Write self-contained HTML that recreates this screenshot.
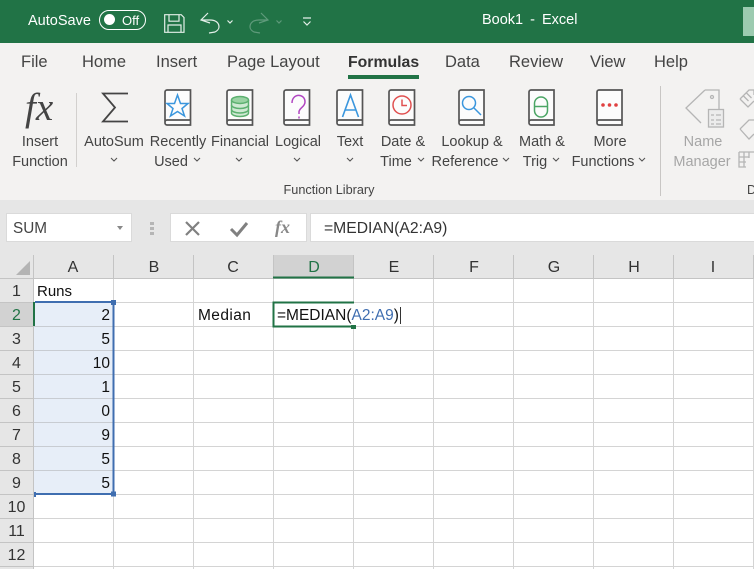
<!DOCTYPE html>
<html><head><meta charset="utf-8">
<style>
html,body{margin:0;padding:0}
body{width:754px;height:569px;overflow:hidden;position:relative;background:#fff;font-family:"Liberation Sans",sans-serif;color:#222}
.a{position:absolute;white-space:nowrap}
.tab{position:absolute;top:53px;font-size:16.5px;color:#444;white-space:nowrap}
.rb{position:absolute;font-size:14.5px;color:#444;white-space:nowrap;transform:translateX(-50%)}
.gr{color:#a6a6a6}
.ch{position:absolute;top:259px;font-size:16px;color:#333;transform:translateX(-50%)}
.rh{position:absolute;left:0;width:33px;text-align:center;font-size:16px;color:#333}
.v{position:absolute;left:34px;width:76px;text-align:right;font-size:15.5px;color:#111}
svg{position:absolute;overflow:visible}
</style></head><body>
<div class="a" style="left:0;top:0;width:754px;height:43px;background:#217346"></div>
<div class="a" style="left:28px;top:13px;font-size:14.5px;color:#fff">AutoSave</div>
<div class="a" style="left:99px;top:10px;width:45px;height:18px;border:1px solid #fff;border-radius:10px"></div>
<div class="a" style="left:104px;top:14px;width:11px;height:11px;background:#fff;border-radius:50%"></div>
<div class="a" style="left:122px;top:13px;font-size:13px;color:#fff">Off</div>
<svg style="left:0;top:0" width="340" height="43" fill="none" stroke="#e4efe9" stroke-width="1.2">
<path d="M164.700 14.700h16.500l2.800 2.800v14.800h-19.300zM169 14.700v6.500h10v-6.500M168 32.300v-7.300h13v7.300"/>
<path d="M208 13l-7 7 9 3M201 20h9c6 0 9 3 9 7 0 2-2 4-4 5l-6 1"/>
<path d="M227.500 20.500l2.500 2.500 2.500-2.500" stroke-width="1.2"/>
<g stroke="#5f9a7b"><path d="M261 13l7 7-9 3M268 20h-9c-6 0-9 3-9 7 0 2 2 4 4 5l6 1"/><path d="M276.500 20.500l2.500 2.500 2.500-2.500" stroke-width="1.2"/></g>
<path d="M303 18h8M303.500 21.500l3.500 3.500 3.500-3.500" stroke-width="1.200"/>
</svg>
<div class="a" style="left:482px;top:12px;font-size:14.500px;color:#fff;word-spacing:3px">Book1 - Excel</div>
<div class="a" style="left:743px;top:7px;width:11px;height:29px;background:#9ccbb0"></div>

<div class="a" style="left:0;top:43px;width:754px;height:157px;background:#f3f2f1"></div>
<div class="a" style="left:0;top:200px;width:754px;height:55px;background:#e6e6e6"></div>
<div class="tab" style="left:21px">File</div>
<div class="tab" style="left:82px">Home</div>
<div class="tab" style="left:156px">Insert</div>
<div class="tab" style="left:227px">Page Layout</div>
<div class="tab" style="left:348px;font-weight:bold;color:#333;font-size:15.800px;top:54px">Formulas</div>
<div class="a" style="left:348px;top:75px;width:71px;height:4px;background:#217346"></div>
<div class="tab" style="left:445px">Data</div>
<div class="tab" style="left:509px">Review</div>
<div class="tab" style="left:590px">View</div>
<div class="tab" style="left:654px">Help</div>

<div class="a" style="left:76px;top:93px;width:1px;height:74px;background:#d2d0ce"></div>
<div class="a" style="left:660px;top:86px;width:1px;height:110px;background:#c8c6c4"></div>
<div class="a" style="left:25px;top:85px;font-family:'Liberation Serif',serif;font-style:italic;font-size:39px;color:#444">fx</div>

<svg style="left:0;top:85px" width="754" height="60" fill="none" stroke="#555" stroke-width="1.700">
<path d="M128 8.500h-25l12 14-12 14h25" stroke-width="1.800" stroke="#444"/>
<g fill="#fcfcfc">
<path d="M167 5h23.500v35h-23.500a2 2 0 0 1-2-2v-31a2 2 0 0 1 2-2zM165 37a2 2 0 0 1 2-2h23.500"/>
<path d="M229 5h23.500v35h-23.500a2 2 0 0 1-2-2v-31a2 2 0 0 1 2-2zM227 37a2 2 0 0 1 2-2h23.500"/>
<path d="M286 5h23.500v35h-23.500a2 2 0 0 1-2-2v-31a2 2 0 0 1 2-2zM284 37a2 2 0 0 1 2-2h23.500"/>
<path d="M339 5h23.500v35h-23.500a2 2 0 0 1-2-2v-31a2 2 0 0 1 2-2zM337 37a2 2 0 0 1 2-2h23.500"/>
<path d="M391 5h23.500v35h-23.500a2 2 0 0 1-2-2v-31a2 2 0 0 1 2-2zM389 37a2 2 0 0 1 2-2h23.500"/>
<path d="M461 5h23v35h-23a2 2 0 0 1-2-2v-31a2 2 0 0 1 2-2zM459 37a2 2 0 0 1 2-2h23"/>
<path d="M531 5h23v35h-23a2 2 0 0 1-2-2v-31a2 2 0 0 1 2-2zM529 37a2 2 0 0 1 2-2h23"/>
<path d="M599 5h23v35h-23a2 2 0 0 1-2-2v-31a2 2 0 0 1 2-2zM597 37a2 2 0 0 1 2-2h23"/>
</g>
<g stroke-width="1.500">
<path d="M177.500 10l3 8.500h7.500l-6 5 2.500 7.500-7-4.500-7 4.500 2.500-7.500-6-5h7.500z" stroke="#3a96dd"/>
<g stroke="#5cb070"><path d="M231.500 15v13c0 2 4 3.500 8.500 3.500s8.500-1.500 8.500-3.500v-13" fill="#cfe9d4"/><ellipse cx="240" cy="15" rx="8.500" ry="3.500" fill="#9ad3a4"/><path d="M231.500 20c0 2 4 3.500 8.500 3.500s8.500-1.500 8.500-3.500M231.500 24.500c0 2 4 3.500 8.500 3.500s8.500-1.500 8.500-3.500"/></g>
<path d="M292 18c0-10 13-10 13-1 0 5-6 6-6 10v2M299 31.500v2" stroke="#b146c2"/>
<path d="M342.500 32l8-22 8 22M345.500 25h10" stroke="#3a96dd" stroke-width="1.600"/>
<g stroke="#e05050"><circle cx="402" cy="20" r="9"/><path d="M402 14.500v6h5"/></g>
<g stroke="#3a96dd"><circle cx="469" cy="18" r="6.500"/><path d="M474 23l7 7"/></g>
<g stroke="#4aa564"><rect x="534.500" y="12" width="13" height="20" rx="6.500"/><path d="M534.500 21.500h13"/></g>
</g>
<g fill="#e04040" stroke="none"><circle cx="603" cy="20" r="1.800"/><circle cx="609.500" cy="20" r="1.800"/><circle cx="616" cy="20" r="1.800"/></g>
<g stroke="#b5b5b5" stroke-width="1.300">
<path d="M705 5h14v19M705 5l-19 18 15 15"/>
<rect x="708.500" y="24.500" width="15" height="17.500" fill="#ececec"/>
<path d="M711 30h3M716 30h5M711 35h3M716 35h5M711 39h3M716 39h5"/>
<circle cx="712" cy="12" r="1.500"/>
<path d="M740 14l9-9h5v5M740 14l8 8 6-6M743.500 11l5 5M746.500 8l5 5"/>
<path d="M740 44l9-9h5M740 44l9 10 5-5"/>
<path d="M739 67h15M739 67v15h7M739 72h10M739 77h7M744 67v15M749 67v6"/>
</g>
</svg>

<div class="rb" style="left:40px;top:134px">Insert</div>
<div class="rb" style="left:40px;top:154px">Function</div>
<div class="rb" style="left:114px;top:134px">AutoSum</div>
<div class="rb" style="left:178px;top:134px">Recently</div>
<div class="rb" style="left:171px;top:154px">Used</div>
<div class="rb" style="left:240px;top:134px">Financial</div>
<div class="rb" style="left:298px;top:134px">Logical</div>
<div class="rb" style="left:350px;top:134px">Text</div>
<div class="rb" style="left:403px;top:134px">Date &amp;</div>
<div class="rb" style="left:396px;top:154px">Time</div>
<div class="rb" style="left:472px;top:134px">Lookup &amp;</div>
<div class="rb" style="left:465px;top:154px">Reference</div>
<div class="rb" style="left:542px;top:134px">Math &amp;</div>
<div class="rb" style="left:535px;top:154px">Trig</div>
<div class="rb" style="left:610px;top:134px">More</div>
<div class="rb" style="left:603px;top:154px">Functions</div>
<div class="rb gr" style="left:703px;top:134px">Name</div>
<div class="rb gr" style="left:702px;top:154px">Manager</div>
<div class="rb" style="left:329px;top:183px;font-size:12.700px">Function Library</div>
<div class="a" style="left:747px;top:183px;font-size:12.700px;color:#444">D</div>
<svg style="left:0;top:150px" width="754" height="20" fill="none" stroke="#555" stroke-width="1.100">
<path d="M111 8l3 3 3-3M194 8l3 3 3-3M236 8l3 3 3-3M294 8l3 3 3-3M347 8l3 3 3-3M418 8l3 3 3-3M503 8l3 3 3-3M553 8l3 3 3-3M639 8l3 3 3-3"/>
</svg>

<div class="a" style="left:6px;top:213px;width:126px;height:29px;background:#fff;border:1px solid #dadada;box-sizing:border-box"></div>
<div class="a" style="left:13px;top:220px;font-size:15.300px;color:#444">SUM</div>
<div class="a" style="left:117px;top:226px;width:0;height:0;border-left:3.500px solid transparent;border-right:3.500px solid transparent;border-top:4px solid #888"></div>
<div class="a" style="left:150px;top:222px;width:4px;height:3px;background:#b5b5b5;box-shadow:0 5px 0 #b5b5b5,0 10px 0 #b5b5b5"></div>
<div class="a" style="left:170px;top:213px;width:137px;height:29px;background:#fff;border:1px solid #dadada;box-sizing:border-box"></div>
<div class="a" style="left:310px;top:213px;width:444px;height:29px;background:#fff;border:1px solid #dadada;border-right:none;box-sizing:border-box"></div>
<svg style="left:0;top:205px" width="300" height="40" fill="none" stroke="#808080" stroke-width="2.200">
<path d="M186 17l13 13M199 17l-13 13"/>
<path d="M231 24l6 6 10-12" stroke-width="3"/>
</svg>
<div class="a" style="left:275px;top:217px;font-family:'Liberation Serif',serif;font-style:italic;font-weight:bold;font-size:18px;color:#888">fx</div>
<div class="a" style="left:324px;top:220px;font-size:15.700px;color:#333">=MEDIAN(A2:A9)</div>

<div class="a" style="left:0;top:255px;width:754px;height:23px;background:#e6e6e6"></div>
<div class="a" style="left:0;top:278px;width:33px;height:291px;background:#e6e6e6"></div>
<div class="a" style="left:273px;top:255px;width:81px;height:23px;background:#d2d2d2"></div>
<div class="a" style="left:0;top:302px;width:33px;height:24px;background:#d2d2d2"></div>
<svg style="left:0;top:0" width="754" height="569">
<path d="M30 261v14h-14z" fill="#b4b4b4"/>
<g stroke="#d4d4d4" stroke-width="1">
<path d="M113.500 278v291M193.500 278v291M273.500 278v291M353.500 278v291M433.500 278v291M513.500 278v291M593.500 278v291M673.500 278v291M753.500 278v291"/>
<path d="M33 302.500h721M33 326.500h721M33 350.500h721M33 374.500h721M33 398.500h721M33 422.500h721M33 446.500h721M33 470.500h721M33 494.500h721M33 518.500h721M33 542.500h721M33 566.500h721"/>
</g>
<g stroke="#c4c4c4" stroke-width="1">
<path d="M33.500 255v314M113.500 255v23M193.500 255v23M273.500 255v23M353.500 255v23M433.500 255v23M513.500 255v23M593.500 255v23M673.500 255v23M753.500 255v23"/>
<path d="M0 278.500h754M0 302.500h33M0 326.500h33M0 350.500h33M0 374.500h33M0 398.500h33M0 422.500h33M0 446.500h33M0 470.500h33M0 494.500h33M0 518.500h33M0 542.500h33M0 566.500h33"/>
</g>
<rect x="34" y="302" width="80" height="192" fill="#e7eef8"/>
<path d="M34 326.500h80M34 350.500h80M34 374.500h80M34 398.500h80M34 422.500h80M34 446.500h80M34 470.500h80" stroke="#c8ccd2"/>
<path d="M35 302h78.500v192h-78.500" fill="none" stroke="#3f6eb0" stroke-width="2"/>
<rect x="111" y="300" width="5" height="5" fill="#3f6eb0"/>
<rect x="34" y="492" width="2" height="5" fill="#3f6eb0"/>
<rect x="111" y="491.500" width="5" height="5" fill="#3f6eb0"/>
<path d="M273 277.500h81" stroke="#217346" stroke-width="2"/>
<path d="M34 302v24" stroke="#217346" stroke-width="2"/>
<path d="M354 302.500h-80.500v24h80.500" fill="#fff" stroke="#217346" stroke-width="2"/>
<rect x="351" y="325" width="5" height="4" fill="#217346"/>
</svg>
<div class="ch" style="left:73px">A</div><div class="ch" style="left:154px">B</div><div class="ch" style="left:233px">C</div>
<div class="ch" style="left:314px;color:#217346">D</div><div class="ch" style="left:394px">E</div><div class="ch" style="left:474px">F</div>
<div class="ch" style="left:554px">G</div><div class="ch" style="left:634px">H</div><div class="ch" style="left:713px">I</div>
<div class="rh" style="top:283px">1</div><div class="rh" style="top:307px;color:#217346">2</div><div class="rh" style="top:331px">3</div>
<div class="rh" style="top:355px">4</div><div class="rh" style="top:379px">5</div><div class="rh" style="top:403px">6</div>
<div class="rh" style="top:427px">7</div><div class="rh" style="top:451px">8</div><div class="rh" style="top:475px">9</div>
<div class="rh" style="top:499px">10</div><div class="rh" style="top:523px">11</div><div class="rh" style="top:547px">12</div>
<div class="a" style="left:37px;top:283px;font-size:15px;color:#111">Runs</div>
<div class="v" style="top:307px">2</div><div class="v" style="top:331px">5</div><div class="v" style="top:355px">10</div>
<div class="v" style="top:379px">1</div><div class="v" style="top:403px">0</div><div class="v" style="top:427px">9</div>
<div class="v" style="top:451px">5</div><div class="v" style="top:475px">5</div>
<div class="a" style="left:198px;top:307px;font-size:15.500px;letter-spacing:.4px;color:#111">Median</div>
<div class="a" style="left:277px;top:307px;font-size:15.500px;color:#111;background:#fff;padding-right:1px;border-right:1px solid #333;line-height:17px">=MEDIAN(<span style="color:#3f6eb0">A2:A9</span>)</div>
</body></html>
